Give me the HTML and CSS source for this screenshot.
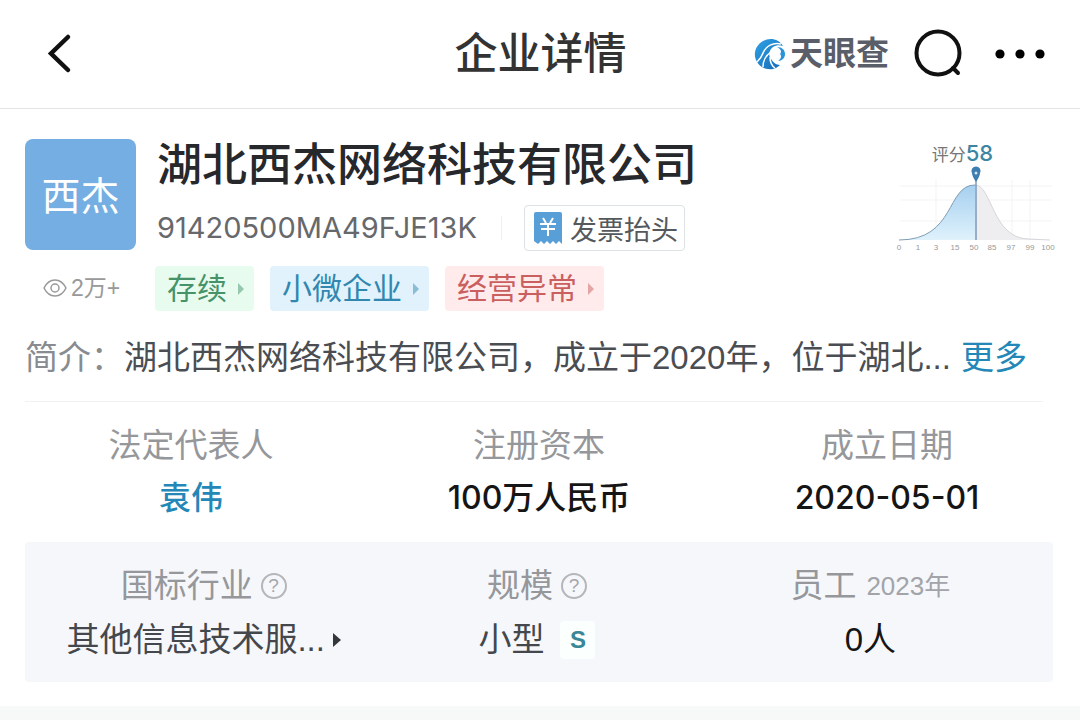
FILE: index.html
```
<!DOCTYPE html>
<html lang="zh-CN">
<head>
    <meta charset="UTF-8">
    <meta name="viewport" content="width=device-width, initial-scale=1.0">
    <title>企业详情</title>
    <link rel="stylesheet" href="styles.css">
</head>
<body>

<header class="topbar">
    <button class="icon-btn back" aria-label="返回">
        <svg width="24" height="40" viewBox="0 0 24 40"><path d="M20 3L3 19.500L20 36" fill="none" stroke="#111" stroke-width="4.500" stroke-linecap="round" stroke-linejoin="miter"/></svg>
    </button>
    <h1>企业详情</h1>
    <div class="actions">
        <a class="brand" href="#">
            <svg width="32" height="32" viewBox="0 0 32 32">
                <defs>
                    <linearGradient id="swirl" x1="0" y1="0" x2="1" y2="1">
                        <stop offset="0" stop-color="#2fa3e6"/>
                        <stop offset="1" stop-color="#1668b4"/>
                    </linearGradient>
                </defs>
                <path d="M29 8C25 1 16-1 9 3C2 7-1 15 2 22C5 29 12 32 19 31C22 30 24 29 26 27C22 27 19 24 17 21C14 17 15 12 19 9C22 7 26 7 29 8Z" fill="url(#swirl)"/>
                <path d="M27 6C19 4 12 8 9 15C8 18 6 21 3 24M17 14C11 18 9 23 9 29M16 19C16 24 18 28 21 30" fill="none" stroke="#fff" stroke-width="1.500"/>
                <path d="M23 9C28 9 31 12 31 16C31 20 28 23 24 23C27 21 28 18 26 16C28 14 27 11 23 9Z" fill="#2a93da"/>
            </svg>
            <span>天眼查</span>
        </a>
        <button class="icon-btn" aria-label="搜索">
            <svg width="48" height="50" viewBox="0 0 48 50"><circle cx="23" cy="24" r="21.500" fill="none" stroke="#111" stroke-width="4"/><path d="M38 39L43 44" stroke="#111" stroke-width="4" stroke-linecap="round"/></svg>
        </button>
        <button class="icon-btn" aria-label="更多操作">
            <svg width="50" height="12" viewBox="0 0 50 12"><circle cx="5" cy="6" r="4.600"/><circle cx="25" cy="6" r="4.600"/><circle cx="45" cy="6" r="4.600"/></svg>
        </button>
    </div>
</header>

<main>
    <section class="company">
        <div class="side">
            <div class="logo">西杰</div>
            <div class="views">
                <svg width="24" height="20" viewBox="0 0 24 20" fill="none" stroke="#999" stroke-width="1.500"><path d="M1 10C4 4 8 2 12 2S20 4 23 10C20 16 16 18 12 18S4 16 1 10Z"/><circle cx="12" cy="10" r="4"/></svg>
                <span>2万+</span>
            </div>
        </div>
        <div class="info">
            <h2>湖北西杰网络科技有限公司</h2>
            <div class="code-row">
                <span class="code">91420500MA49FJE13K</span>
                <button class="invoice">
                    <svg width="28" height="33" viewBox="0 0 28 33"><path d="M2 0H26Q28 0 28 2V32L25 29L22 32L19 29L16 32L13 29L10 32L7 29L4 32L0 29V2Q0 0 2 0Z" fill="#579fd6"/><path d="M9 6L12 11M19 6L16 11M6 12H22M7 17H21M14 11V24" stroke="#fff" stroke-width="2" fill="none"/></svg>
                    发票抬头
                </button>
            </div>
            <div class="tags">
                <a class="tag green" href="#">存续</a>
                <a class="tag blue" href="#">小微企业</a>
                <a class="tag red" href="#">经营异常</a>
            </div>
        </div>
        <div class="score">
            <p>评分<b>58</b></p>
            <svg width="159" height="88" viewBox="0 0 159 88">
                <defs>
                    <linearGradient id="area" x1="0" y1="0" x2="0" y2="1">
                        <stop offset="0" stop-color="#a6cff0"/>
                        <stop offset="1" stop-color="#dff2fc"/>
                    </linearGradient>
                </defs>
                <path d="M6 18H158M6 32H158M6 53H158M42 12V72M118 12V72M136 12V72" stroke="#f3f3f5"/>
                <path d="M81 17C98 17 98 70 134 71L156 72H81Z" fill="#eeeef1"/>
                <path d="M81 17C98 17 98 70 134 71L156 72" fill="none" stroke="#d6d6da"/>
                <path d="M5 72C62 72 52 17 81 17V72Z" fill="url(#area)"/>
                <path d="M5 72C62 72 52 17 81 17" fill="none" stroke="#7f9db5"/>
                <path d="M82 12V72" stroke="#416f9c"/>
                <path d="M78 5A4.500 4.500 0 1 1 86 5Q86 8 82 14Q78 8 78 5Z" fill="#3e7daf"/>
                <circle cx="82" cy="5" r="1.500" fill="#cfe6f5"/>
                <g class="ticks">
                    <text x="5" y="82">0</text>
                    <text x="24" y="82">1</text>
                    <text x="42" y="82">3</text>
                    <text x="61" y="82">15</text>
                    <text x="80" y="82">50</text>
                    <text x="98" y="82">85</text>
                    <text x="117" y="82">97</text>
                    <text x="136" y="82">99</text>
                    <text x="154" y="82">100</text>
                </g>
            </svg>
        </div>
    </section>

    <p class="intro"><span class="intro-label">简介：</span><span>湖北西杰网络科技有限公司，成立于2020年，位于湖北...</span><a href="#">更多</a></p>

    <dl class="facts basic">
        <div>
            <dt>法定代表人</dt>
            <dd><a href="#">袁伟</a></dd>
        </div>
        <div>
            <dt>注册资本</dt>
            <dd>100万人民币</dd>
        </div>
        <div>
            <dt>成立日期</dt>
            <dd>2020-05-01</dd>
        </div>
    </dl>

    <dl class="facts panel">
        <div>
            <dt>国标行业<button class="help" aria-label="国标行业说明">?</button></dt>
            <dd class="more">其他信息技术服...</dd>
        </div>
        <div>
            <dt>规模<button class="help" aria-label="规模说明">?</button></dt>
            <dd>小型<span class="size">S</span></dd>
        </div>
        <div>
            <dt>员工<span class="year">2023年</span></dt>
            <dd class="dark">0人</dd>
        </div>
    </dl>
</main>

</body>
</html>
```
FILE: styles.css
```
* {
    box-sizing: border-box;
}
body {
    margin: 0;
    min-height: 100vh;
    display: flex;
    flex-direction: column;
    font-family: "Liberation Sans", "Noto Sans CJK SC", sans-serif;
    background-color: #f7f9f9;
    color: #4a4d52;
}
h1, h2, p, dl, dd {
    margin: 0;
}
a {
    color: #2387b8;
    text-decoration: none;
}
button {
    padding: 0;
    border: none;
    background: none;
    font-family: inherit;
    color: inherit;
    cursor: pointer;
}
svg {
    display: block;
    flex-shrink: 0;
    overflow: visible;
}

/* top bar */
.topbar {
    display: grid;
    grid-template-columns: 1fr auto 1fr;
    align-items: center;
    height: 109px;
    padding: 0 35px 0 48px;
    background: white;
    border-bottom: 1px solid #e4e4e4;
}
.topbar h1 {
    font-size: 43px;
    line-height: 60px;
    font-weight: 500;
    color: #333;
    margin-right: 12px;
}
.back {
    justify-self: start;
}
.actions {
    display: flex;
    align-items: center;
    justify-content: flex-end;
    gap: 32px;
}
.brand {
    display: flex;
    align-items: center;
    gap: 4px;
    margin-right: -6px;
    font-size: 33px;
    line-height: 40px;
    font-weight: bold;
    color: #5a5e69;
}

/* company card */
main {
    padding: 30px 27px 24px 25px;
    background: white;
}
.company {
    display: flex;
}
.side {
    width: 111px;
    margin-right: 21px;
}
.logo {
    height: 111px;
    border-radius: 8px;
    background: #74aee3;
    color: white;
    font-size: 39px;
    line-height: 115px;
    text-align: center;
}
.views {
    display: flex;
    align-items: center;
    gap: 4px;
    margin-top: 16px;
    padding-left: 18px;
    font-size: 23px;
    line-height: 44px;
    color: #999;
    white-space: nowrap;
}
.info {
    flex: 1;
}
.info h2 {
    font-size: 45px;
    line-height: 54px;
    font-weight: 500;
    color: #26282c;
    white-space: nowrap;
}
.code-row {
    display: flex;
    align-items: center;
    margin-top: 12px;
}
.code {
    padding-right: 24px;
    border-right: 1px solid #f0f0f0;
    font-family: Inter, sans-serif;
    font-size: 29px;
    line-height: 24px;
    color: #66686c;
}
.invoice {
    display: flex;
    align-items: center;
    gap: 8px;
    height: 46px;
    margin-left: 22px;
    padding: 0 6px 0 9px;
    border: 1px solid #dde2e4;
    border-radius: 4px;
    font-size: 27px;
    color: #55585c;
    white-space: nowrap;
}
.tags {
    display: flex;
    gap: 16px;
    margin: 15px 0 0 -2px;
}
.tag {
    display: flex;
    align-items: center;
    gap: 11px;
    padding: 0 10px 0 12px;
    border-radius: 4px;
    font-size: 30px;
    line-height: 45px;
    white-space: nowrap;
}
.tag::after {
    content: "";
    border-left: 6px solid currentColor;
    border-top: 6px solid transparent;
    border-bottom: 6px solid transparent;
    opacity: 0.5;
}
.green {
    background: #e8fbef;
    color: #46936a;
}
.blue {
    background: #e1f2fd;
    color: #3187ad;
}
.red {
    background: #ffebeb;
    color: #ca5f60;
}
.score {
    width: 159px;
}
.score p {
    padding: 2px 22px 0 0;
    font-size: 17px;
    line-height: 24px;
    text-align: center;
    color: #777;
}
.score b {
    font-family: Inter, sans-serif;
    font-size: 22px;
    font-weight: 500;
    color: #3d85a3;
}
.ticks {
    font-size: 8px;
    text-anchor: middle;
    fill: #999;
}

/* intro line */
.intro {
    display: flex;
    margin: 23px 10px 0 0;
    padding-bottom: 19px;
    border-bottom: 1px solid #f0f1f1;
    font-size: 33px;
    line-height: 48px;
    white-space: nowrap;
}
.intro-label {
    color: #888b90;
}
.intro a {
    margin-left: 10px;
}

/* fact grids */
.facts {
    display: grid;
    grid-template-columns: repeat(3, 1fr);
    font-size: 33px;
    line-height: 48px;
}
.facts dt, .facts dd {
    display: flex;
    align-items: center;
    justify-content: center;
    white-space: nowrap;
}
.facts dt {
    color: #95979b;
}
.basic {
    margin: 0 -8px;
    padding: 20px 0;
}
.basic dd {
    margin-top: 4px;
    font-family: Inter, "Noto Sans CJK SC", sans-serif;
    font-size: 32px;
    font-weight: 500;
    color: #151515;
}
.panel {
    padding: 20px 16px 18px 12px;
    border-radius: 4px;
    background: #f6f7fb;
}
.panel dd {
    margin-top: 6px;
    color: #44484d;
}
.panel .dark {
    color: #151515;
}
.help {
    width: 26px;
    height: 26px;
    margin-left: 8px;
    border: 2px solid #b4b6ba;
    border-radius: 50%;
    font-size: 19px;
    line-height: 22px;
    color: #a4a6aa;
}
.more::after {
    content: "";
    margin-left: 8px;
    border-left: 8px solid #34373b;
    border-top: 7px solid transparent;
    border-bottom: 7px solid transparent;
}
.size {
    width: 35px;
    margin-left: 16px;
    border-radius: 4px;
    background: #fbfffe;
    font-size: 24px;
    line-height: 38px;
    font-weight: bold;
    text-align: center;
    color: #3a8797;
}
.year {
    margin-left: 10px;
    font-size: 26px;
    color: #a2a4a9;
}
```
